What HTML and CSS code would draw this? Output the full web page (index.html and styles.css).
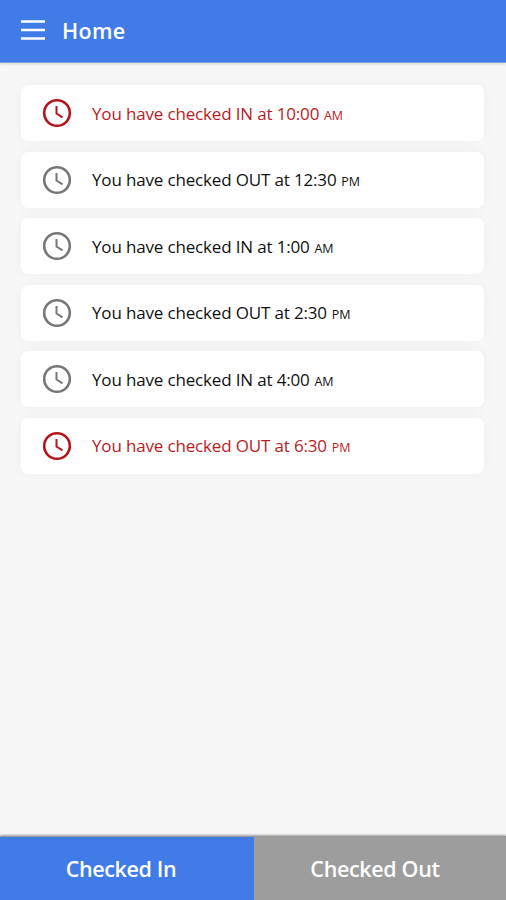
FILE: index.html
```html
<!DOCTYPE html>
<html lang="en">
<head>
<meta charset="utf-8">
<title>Home</title>
<link rel="stylesheet" href="styles.css">
</head>
<body>
<svg class="defs" width="0" height="0"><symbol id="clock" viewBox="0 0 30 30"><circle cx="15" cy="15" r="12.8"/><path class="hands" d="M14.500 8V15.500L20.500 19.300"/></symbol></svg>
<header class="bar">
<svg class="menu" viewBox="0 0 24 20"><path d="M0 1.500H24M0 10H24M0 18.500H24"/></svg>
<h1 class="title">Home</h1>
</header>
<main class="list">
<div class="card alert"><svg class="clock"><use href="#clock"/></svg><p class="line">You have checked IN at 10:00 <span class="ap">AM</span></p></div>
<div class="card"><svg class="clock"><use href="#clock"/></svg><p class="line">You have checked OUT at 12:30 <span class="ap">PM</span></p></div>
<div class="card"><svg class="clock"><use href="#clock"/></svg><p class="line">You have checked IN at 1:00 <span class="ap">AM</span></p></div>
<div class="card"><svg class="clock"><use href="#clock"/></svg><p class="line">You have checked OUT at 2:30 <span class="ap">PM</span></p></div>
<div class="card"><svg class="clock"><use href="#clock"/></svg><p class="line">You have checked IN at 4:00 <span class="ap">AM</span></p></div>
<div class="card alert"><svg class="clock"><use href="#clock"/></svg><p class="line">You have checked OUT at 6:30 <span class="ap">PM</span></p></div>
</main>
<footer class="actions">
<button class="action in">Checked In</button>
<button class="action out">Checked Out</button>
</footer>
</body>
</html>
```
FILE: styles.css
```css
* { box-sizing: border-box; }
body { margin: 0; height: 900px; display: flex; flex-direction: column; background: #f7f7f7; font-family: "Open Sans", "Noto Sans", sans-serif; overflow: hidden; }
.defs { display: none; }
.bar { height: 62px; flex: none; display: flex; align-items: center; padding-left: 21px; background: #417be7; box-shadow: 0 1px 0 #7d9fdd, 0 2px 3px rgba(0,0,0,.15); color: #fff; }
.menu { width: 24px; height: 20px; margin-top: -2px; stroke: #fff; stroke-width: 2.6; fill: none; }
.title { margin: 0 0 0 17px; font-size: 21.5px; line-height: 30px; font-weight: 600; letter-spacing: .3px; }
.list { flex: 1; display: flex; flex-direction: column; gap: 10.500px; padding: 23.400px 22px 0 21px; }
.card { height: 56px; flex: none; display: flex; align-items: center; padding-left: 21px; border-radius: 7px; background: #fff; color: #111; box-shadow: 0 0 12px rgba(0,0,0,.04); }
.clock { width: 30px; height: 30px; fill: none; stroke: #777; stroke-width: 2.6; }
.hands { stroke-width: 2; }
.line { margin: 0 0 0 20px; padding-top: 3px; font-size: 17px; line-height: 30px; letter-spacing: -.16px; white-space: nowrap; }
.ap { margin-left: .5px; font-size: 12.5px; letter-spacing: 0; }
.alert { color: #b91c22; }
.alert .clock { stroke: #b3151b; }
.actions { height: 64px; flex: none; display: flex; border-top: 1px solid #999; box-shadow: 0 -1px 2px rgba(0,0,0,.35); }
.action { border: 0; padding: 0; color: #fff; font: 600 21.5px "Open Sans", sans-serif; letter-spacing: -.35px; }
.in { width: 254px; padding-right: 12px; background: #417be7; }
.out { flex: 1; padding-right: 10px; background: #9d9d9d; }
```
